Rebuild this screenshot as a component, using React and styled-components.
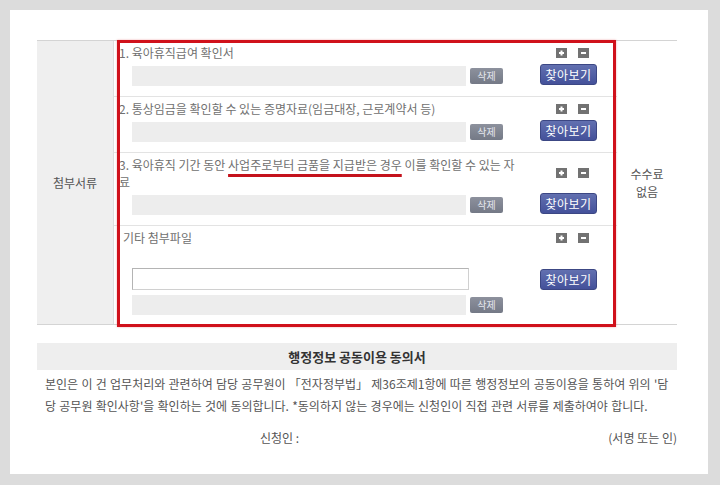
import styled, { createGlobalStyle } from "styled-components"

const GlobalStyle = createGlobalStyle`
  *{ box-sizing: border-box; }
  body{
    margin: 0;
    background: #dcdcdc;
    font-family: "Noto Sans CJK KR", "Noto Sans", sans-serif;
  }
`

function Square({ minus }){
    return(
        <svg width="11" height="10" viewBox="0 0 11 10">
            <rect width="11" height="10" fill="#727272" />
            <path d="M3 5h5" stroke="#fff" strokeWidth="2" />
            {!minus && <path d="M5.5 2.5v5" stroke="#fff" strokeWidth="2" />}
        </svg>
    )
}

function Icons(){
    return(
        <IconBox>
            <Square />
            <Square minus />
        </IconBox>
    )
}

export default function App(){
    return(
        <Frame>
            <GlobalStyle />
            <Panel>
                <Table>
                    <HeadCell>첨부서류</HeadCell>
                    <DocCell>
                        <Row>
                            <Label>1. 육아휴직급여 확인서</Label>
                            <Icons />
                            <FileLine>
                                <GrayInput readOnly />
                                <DelBtn>삭제</DelBtn>
                            </FileLine>
                            <FindBtn>찾아보기</FindBtn>
                        </Row>
                        <Row>
                            <Label>2. 통상임금을 확인할 수 있는 증명자료(임금대장, 근로계약서 등)</Label>
                            <Icons />
                            <FileLine>
                                <GrayInput readOnly />
                                <DelBtn>삭제</DelBtn>
                            </FileLine>
                            <FindBtn>찾아보기</FindBtn>
                        </Row>
                        <Row>
                            <Label>3. 육아휴직 기간 동안 <Mark>사업주로부터 금품을 지급받은 경우</Mark> 이를 확인할 수 있는 자<br />료</Label>
                            <Icons />
                            <FileLine>
                                <GrayInput readOnly />
                                <DelBtn>삭제</DelBtn>
                            </FileLine>
                            <FindBtn>찾아보기</FindBtn>
                        </Row>
                        <Row $last>
                            <Label $indent={4}>기타 첨부파일</Label>
                            <Icons />
                            <FileLine $spaced>
                                <WhiteInput readOnly />
                            </FileLine>
                            <FindBtn $low>찾아보기</FindBtn>
                            <FileLine>
                                <GrayInput readOnly />
                                <DelBtn>삭제</DelBtn>
                            </FileLine>
                        </Row>
                    </DocCell>
                    <FeeCell>수수료<br />없음</FeeCell>
                    <RedBox />
                </Table>

                <ConsentHead>행정정보 공동이용 동의서</ConsentHead>
                <Para>
                    본인은 이 건 업무처리와 관련하여 담당 공무원이 「전자정부법」 제36조제1항에 따른 행정정보의 공동이용을 통하여 위의 '담<br />
                    당 공무원 확인사항'을 확인하는 것에 동의합니다. *동의하지 않는 경우에는 신청인이 직접 관련 서류를 제출하여야 합니다.
                </Para>
                <Sign>
                    <span>신청인 :</span>
                    <span className="seal">(서명 또는 인)</span>
                </Sign>
            </Panel>
        </Frame>
    )
}

const Frame = styled.div`
    padding: 10px 12px 11px 10px;
`
const Panel = styled.div`
    background: #ffffff;
    height: 464px;
    padding: 30px 31px 0 27px;
`
const Table = styled.div`
    position: relative;
    display: grid;
    grid-template-columns: 77px 503px 60px;
    border-top: 1px solid #d4d4d4;
    border-bottom: 1px solid #d4d4d4;
`
const HeadCell = styled.div`
    display: flex;
    align-items: center;
    justify-content: center;
    background: #efefef;
    border-right: 1px solid #dedede;
    font-size: 12px;
    color: #555;
`
const DocCell = styled.div`
    display: flex;
    flex-direction: column;
`
const FeeCell = styled.div`
    display: flex;
    align-items: center;
    justify-content: center;
    text-align: center;
    font-size: 12px;
    line-height: 18px;
    color: #555;
`
const Row = styled.div`
    display: grid;
    grid-template-columns: minmax(0, 1fr) 57px;
    column-gap: 37px;
    row-gap: 3px;
    padding: 3px 20px ${p => p.$last ? 9 : 10}px 5px;
    border-bottom: ${p => p.$last ? "none" : "1px solid #e3e3e3"};
`
const Label = styled.div`
    font-size: 12px;
    line-height: 17px;
    color: #707070;
    white-space: nowrap;
    overflow: visible;
    padding-left: ${p => p.$indent || 0}px;
`
const Mark = styled.span`
    text-decoration: underline;
    text-decoration-color: #c4121c;
    text-decoration-thickness: 3px;
    text-underline-offset: 4px;
`
const IconBox = styled.div`
    display: flex;
    align-items: center;
    justify-content: flex-end;
    gap: 11px;
    padding-right: 8px;
    align-self: center;
    svg{ display: block; }
`
const FileLine = styled.div`
    display: flex;
    align-items: center;
    gap: 4px;
    margin-left: 13px;
    margin-top: ${p => p.$spaced ? 19 : 0}px;
`
const GrayInput = styled.input`
    flex: 1;
    min-width: 0;
    height: 20px;
    border: none;
    background: #ededed;
    padding: 0;
    margin: 2px 0 0;
`
const WhiteInput = styled.input`
    width: 337px;
    height: 22px;
    border: 1px solid #b4b4b4;
    border-bottom-color: #d0d0d0;
    border-right-color: #d0d0d0;
    background: #fff;
    padding: 0;
    margin: 0;
`
const DelBtn = styled.button`
    width: 33px;
    height: 16px;
    border: none;
    border-radius: 2px;
    background: linear-gradient(#8d919d, #747986);
    color: #e4e6ee;
    font-family: inherit;
    font-size: 10px;
    line-height: 16px;
    padding: 0;
    margin-top: 2px;
`
const FindBtn = styled.button`
    align-self: ${p => p.$low ? "end" : "start"};
    width: 57px;
    height: 21px;
    border: 1px solid #3c4784;
    border-radius: 3px;
    background: linear-gradient(#6270b0, #44519a);
    color: #ffffff;
    font-family: inherit;
    font-size: 12px;
    line-height: 19px;
    letter-spacing: 0.5px;
    padding: 0;
`
const RedBox = styled.div`
    position: absolute;
    left: 80px;
    top: -1px;
    width: 499px;
    height: 287px;
    border: 3px solid #d0111b;
    box-shadow: 0 0 2px rgba(208, 17, 27, 0.35);
    pointer-events: none;
`
const ConsentHead = styled.div`
    margin-top: 18px;
    height: 27px;
    display: flex;
    align-items: center;
    justify-content: center;
    background: #eeeeee;
    font-size: 13px;
    font-weight: 700;
    color: #333;
`
const Para = styled.p`
    margin: 0;
    padding: 3px 8px 0;
    font-size: 12px;
    line-height: 22px;
    color: #555;
    word-spacing: 0.6px;
    white-space: nowrap;
`
const Sign = styled.div`
    display: flex;
    margin-top: 10px;
    padding-left: 223px;
    font-size: 12px;
    line-height: 22px;
    color: #555;
    .seal{
        margin-left: auto;
    }
`
